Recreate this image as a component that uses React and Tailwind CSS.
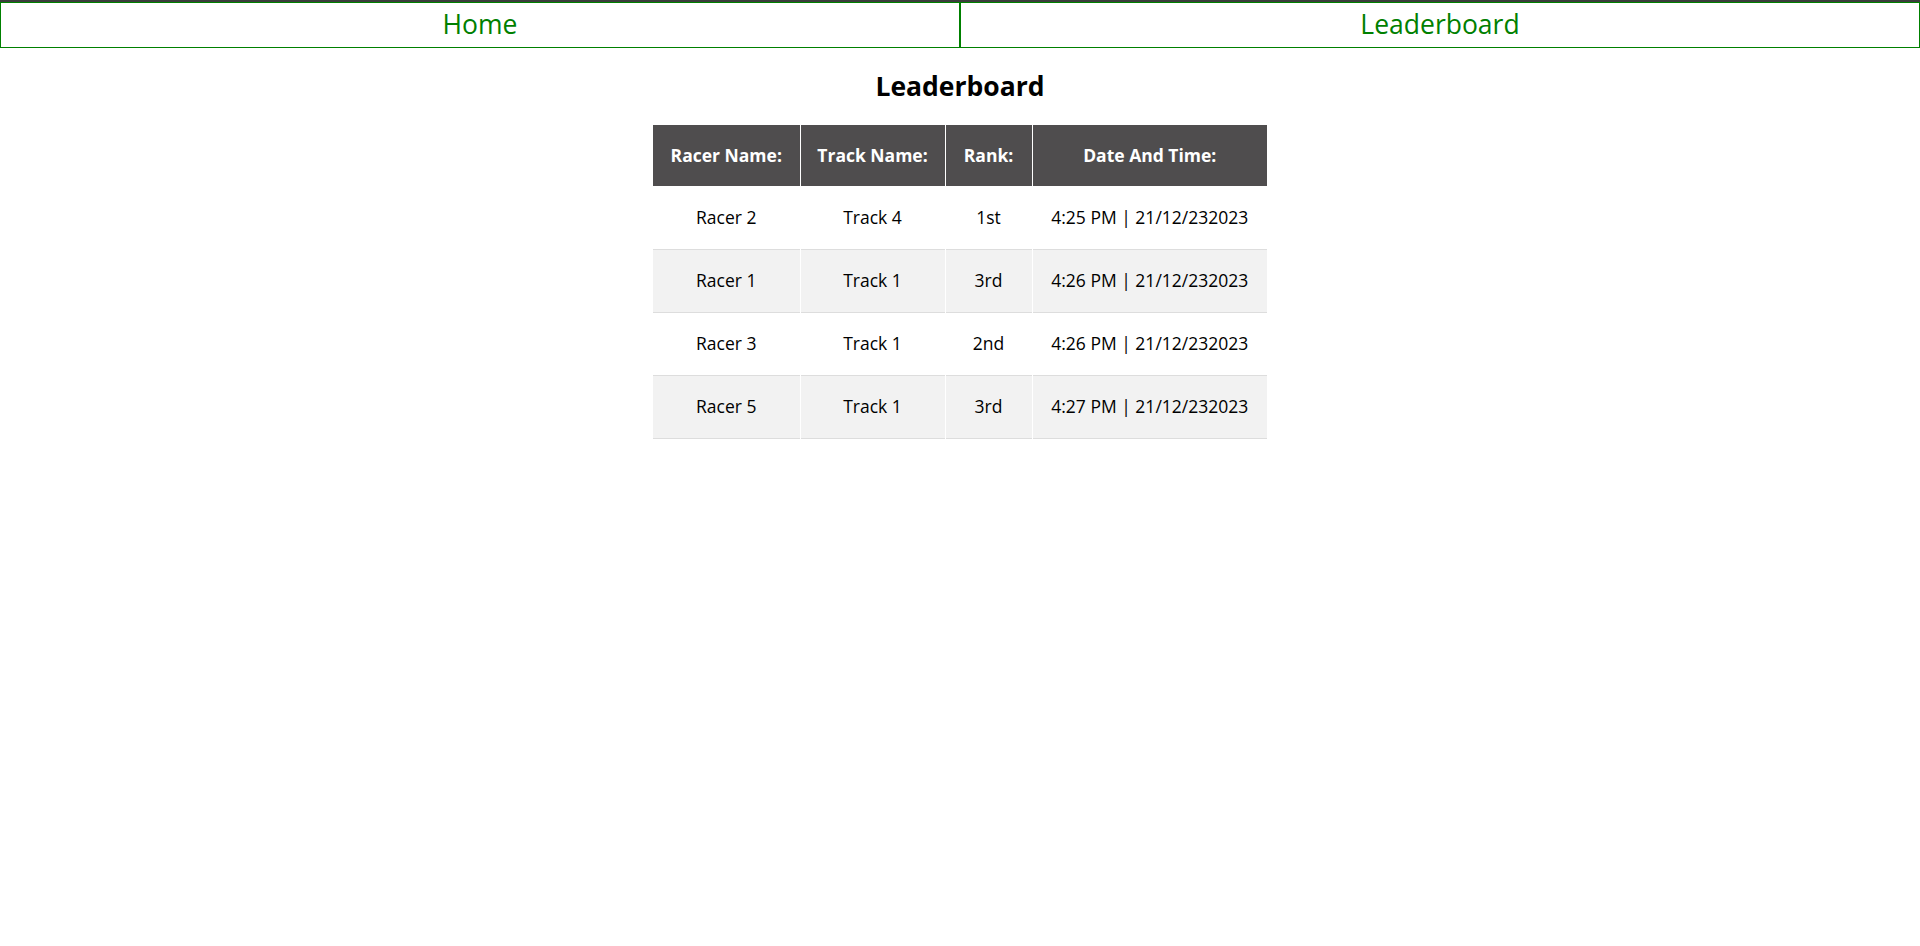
const rows = [
  { racer: "Racer 2", track: "Track 4", rank: "1st", date: "4:25 PM | 21/12/232023" },
  { racer: "Racer 1", track: "Track 1", rank: "3rd", date: "4:26 PM | 21/12/232023" },
  { racer: "Racer 3", track: "Track 1", rank: "2nd", date: "4:26 PM | 21/12/232023" },
  { racer: "Racer 5", track: "Track 1", rank: "3rd", date: "4:27 PM | 21/12/232023" },
];

export default function App() {
  return (
    <div className="min-h-screen bg-white text-black font-['Open_Sans',sans-serif]">
      <div className="h-[2px] bg-[#3c3c3c]" />
      <nav className="flex">
        <a href="#" className="flex h-[46px] w-1/2 items-center justify-center border border-[#008000] text-[26.5px] text-[#008000]">
          Home
        </a>
        <a href="#" className="flex h-[46px] w-1/2 items-center justify-center border border-[#008000] text-[26.5px] text-[#008000]">
          Leaderboard
        </a>
      </nav>

      <h2 className="mt-[22px] text-center text-[26.5px] font-bold leading-[32px]">Leaderboard</h2>

      <div className="mt-[23px] flex justify-center">
        <table className="w-[614px] table-fixed border-collapse text-center text-[17.5px]">
          <thead>
            <tr className="h-[61px] bg-[#4f4d4e] text-white">
              <th className="w-[147px] border-r border-white font-bold">Racer Name:</th>
              <th className="w-[145px] border-r border-white font-bold">Track Name:</th>
              <th className="w-[87px] border-r border-white font-bold">Rank:</th>
              <th className="w-[235px] font-bold">Date And Time:</th>
            </tr>
          </thead>
          <tbody>
            {rows.map((r, i) => (
              <tr key={i} className={`h-[63px] border-b border-[#dddddd] ${i % 2 ? "bg-[#f2f2f2]" : "bg-white"}`}>
                <td className="border-r border-white">{r.racer}</td>
                <td className="border-r border-white">{r.track}</td>
                <td className="border-r border-white">{r.rank}</td>
                <td className="whitespace-nowrap">{r.date}</td>
              </tr>
            ))}
          </tbody>
        </table>
      </div>
    </div>
  );
}
